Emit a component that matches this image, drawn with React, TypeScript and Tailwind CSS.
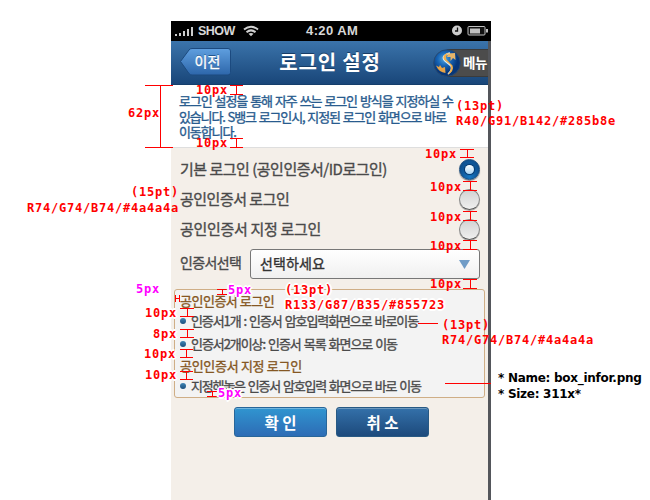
import type { ReactNode } from "react";

const KR = "font-['Noto_Sans_CJK_KR',sans-serif]";
const MEDIUM = "[-webkit-text-stroke:0.35px_currentColor]";

type NoteProps = { x: number; y: number; children: ReactNode; tone?: "red" | "pink"; halo?: boolean };

const HALO =
  "[text-shadow:1px_0_#fff,-1px_0_#fff,0_1px_#fff,0_-1px_#fff,1px_1px_#fff,-1px_-1px_#fff,2px_0_#fff,-2px_0_#fff,0_2px_#fff,0_-2px_#fff]";

function Note({ x, y, children, tone = "red", halo = false }: NoteProps) {
  return (
    <span
      className={`absolute whitespace-pre font-['DejaVu_Sans_Mono',monospace] text-[12px] leading-4 font-bold tracking-[0.78px] ${
        tone === "red" ? "text-[#ff0000]" : "text-[#f0f]"
      } ${halo ? HALO : ""}`}
      style={{ left: x, top: y - 8 }}
    >
      {children}
    </span>
  );
}

const notes: NoteProps[] = [
  { x: 128, y: 113, children: "62px" },
  { x: 196, y: 90, children: "10px" },
  { x: 196, y: 143, children: "10px" },
  { x: 425, y: 154, children: "10px" },
  { x: 430, y: 187, children: "10px" },
  { x: 430, y: 217, children: "10px" },
  { x: 430, y: 246, children: "10px" },
  { x: 430, y: 284, children: "10px" },
  { x: 131, y: 192, children: "(15pt)" },
  { x: 27, y: 208, children: "R74/G74/B74/#4a4a4a" },
  { x: 456, y: 106, children: "(13pt)" },
  { x: 456, y: 121, children: "R40/G91/B142/#285b8e" },
  { x: 285, y: 290, children: "(13pt)", halo: true },
  { x: 285, y: 305, children: "R133/G87/B35/#855723", halo: true },
  { x: 442, y: 325, children: "(13pt)" },
  { x: 442, y: 340, children: "R74/G74/B74/#4a4a4a" },
  { x: 145, y: 313, children: "10px", halo: true },
  { x: 153, y: 334, children: "8px", halo: true },
  { x: 144, y: 354, children: "10px", halo: true },
  { x: 145, y: 375, children: "10px", halo: true },
  { x: 136, y: 289, children: "5px", tone: "pink", halo: true },
  { x: 228, y: 290, children: "5px", tone: "pink", halo: true },
  { x: 218, y: 393, children: "5px", tone: "pink", halo: true },
];

const brackets = [
  [230, 85, 243, 94],
  [230, 138, 243, 147],
  [460, 149, 474, 157],
  [463, 181, 477, 190],
  [463, 211, 477, 220],
  [463, 240, 477, 249],
  [463, 279, 477, 288],
  [180, 308, 194, 316],
  [180, 329, 194, 337],
  [180, 349, 193, 357],
  [180, 371, 193, 379],
  [217, 289, 227, 294],
  [207, 391, 217, 396],
  [145, 85, 173, 147],
];

function Dimensions() {
  return (
    <svg className="absolute inset-0" width="650" height="500" fill="none" stroke="#f00" shapeRendering="crispEdges">
      {brackets.map(([l, t, r, b]) => {
        const mid = Math.floor((l + r) / 2) + (r - l > 20 ? 1.5 : 0.5);
        return <path key={`${l}-${t}`} d={`M${l} ${t + 0.5}H${r}M${l} ${b + 0.5}H${r}M${mid} ${t}V${b}`} />;
      })}
      <path d="M175.500 295V302M179.500 295V302M175 298.500H180" />
      <path d="M418 323.500H438M445 383.500H491" />
    </svg>
  );
}

function Radio({ checked = false }: { checked?: boolean }) {
  return checked ? (
    <span className="flex size-[21px] items-center justify-center rounded-full border border-[#174a7c] bg-radial-[at_50%_85%] from-[#1678c4] to-[#0b417d] shadow-[0_1px_1px_#888]">
      <span className="size-[9px] rounded-full bg-linear-to-b from-white to-[#a9d4f2] shadow-[0_0_1px_1px_#0a3566]" />
    </span>
  ) : (
    <span className="size-[21px] rounded-full border border-[#858585] border-b-[#555] bg-linear-to-b from-[#d2d2d2] to-[#f0f0f0] shadow-[0_1px_0_#aaa]" />
  );
}

function Option({ children, checked }: { children: ReactNode; checked?: boolean }) {
  return (
    <div className={`flex h-[30px] items-center justify-between pr-2 pl-[9px] text-[15px] text-[#4a4a4a] ${MEDIUM}`}>
      {children}
      <Radio checked={checked} />
    </div>
  );
}

function Item({ children }: { children: ReactNode }) {
  return (
    <>
      <span className="size-[6px] shrink-0 rounded-full bg-linear-to-b from-[#4185b5] to-[#1d4f7d]" />
      <span className="whitespace-nowrap">{children}</span>
    </>
  );
}

function StatusBar() {
  return (
    <div className="flex h-5 items-center bg-black pr-[2px] pl-1 font-['Liberation_Sans',sans-serif] text-[13px] font-bold text-[#d8d8d8]">
      <div className="flex w-[131px] items-center">
        <svg width="20" height="12" viewBox="0 0 20 12" fill="#ccc">
          <path d="M0 9h2v2H0zM4 8h2v3H4zM8 6h2v5H8zM12 4h2v7h-2zM16 2h2v9h-2z" />
        </svg>
        <span className="w-[48px] pl-[3px] text-[12.500px] tracking-[-0.5px]">SHOW</span>
        <svg width="16" height="12" viewBox="0 0 16 12" fill="none" stroke="#d0d0d0" strokeWidth="2">
          <path d="M1 4.500Q8-1 15 4.500M3.500 7.200Q8 3.500 12.500 7.200" />
          <path d="M5.500 8.800Q8 7 10.500 8.800L8 11.300Z" fill="#d0d0d0" stroke="none" />
        </svg>
      </div>
      <span className="flex-1 tracking-[0.4px]">4:20 AM</span>
      <svg width="37" height="12" viewBox="0 0 37 12">
        <circle cx="5" cy="5.500" r="5" fill="#ccc" />
        <path d="M5.500 2.500V6H3" fill="none" stroke="#111" strokeWidth="1.300" />
        <rect x="16" y="1.500" width="17" height="8.500" rx="1" fill="#111" stroke="#c0c0c0" />
        <path d="M18 3.500h10v5H18zM34 4h2v3.500h-2z" fill="#c0c0c0" />
      </svg>
    </div>
  );
}

function Header() {
  return (
    <div className="flex h-11 items-center border-b border-[#153e6b] bg-linear-to-b from-[#3b74ab] to-[#194679] pl-2">
      <button className="grid place-items-center">
        <svg className="[grid-area:1/1]" width="54" height="31" viewBox="0 0 54 31">
          <defs>
            <linearGradient id="back" x2="0" y2="1">
              <stop stopColor="#5f9fdf" />
              <stop offset="1" stopColor="#2d66aa" />
            </linearGradient>
          </defs>
          <path d="M13 1.500H49Q51.500 1.500 51.500 4V25.500Q51.500 28 49 28H13Q11 28 10 26.500L1.500 14.500L10 3Q11 1.500 13 1.500Z" fill="url(#back)" stroke="#1c4a7f" />
        </svg>
        <span className={`[grid-area:1/1] pb-1 pl-[3px] text-[14px] leading-5 text-white [text-shadow:0_-1px_#24558c] ${MEDIUM}`}>이전</span>
      </button>
      <h1 className="flex-1 pr-[6px] pb-[2px] text-center text-[20px] leading-6 font-bold tracking-[0.8px] text-white [text-shadow:0_-1px_#173d66]">로그인 설정</h1>
      <div className="flex items-center">
        <svg className="z-10" width="28" height="28" viewBox="0 0 28 28">
          <defs>
            <radialGradient id="globe" cx=".4" cy=".35">
              <stop stopColor="#50a5df" />
              <stop offset=".5" stopColor="#1765b6" />
              <stop offset="1" stopColor="#073678" />
            </radialGradient>
          </defs>
          <circle cx="14" cy="14" r="13.300" fill="url(#globe)" stroke="#294a70" />
          <path d="M17 4Q7 7 12 12L18 17Q20 21 15 25" fill="none" stroke="#dcecf5" strokeWidth="1.500" />
          <path d="M15.500 3.500Q8 6 11.500 11L17 15.500Q20 19 14.500 26Q21.500 22 19.500 16.500L13.500 10.500Q12 7 15.500 3.500Z" fill="#f4ae45" />
          <path d="M15 4.500L22 4L22.500 11L20 9L17.500 12L17.500 8L14 8Z" fill="#e6b469" />
          <path d="M3 16.500L6 18L7 16L9 19L12 18L12.500 24Q6 23.500 3 16.500Z" fill="#e8a446" />
        </svg>
        <span className="-ml-[14px] h-[28px] w-[41px] border-y border-[#3b3b3b] bg-[#4c4c4c] pl-[16px] text-[13.500px] leading-[25px] font-bold tracking-[-0.4px] whitespace-nowrap text-white">메뉴</span>
      </div>
    </div>
  );
}

function InfoBox() {
  return (
    <div className={`mt-[10px] ml-[3px] h-[109px] w-[311px] rounded-[3px] border border-[#cfae86] bg-[#f3f3f3] pl-[5px] text-[13px] text-[#4a4a4a] ${MEDIUM}`}>
      <p className="flex h-[21px] items-center tracking-[-0.5px] text-[#855723]">공인인증서 로그인</p>
      <div className="flex h-[20px] items-center gap-[5px] tracking-[-1.1px] [word-spacing:1.2px]"><Item>인증서1개 : 인증서 암호입력화면으로 바로이동</Item></div>
      <div className="flex h-[26px] items-center gap-[5px] tracking-[-1.07px] [word-spacing:1.2px]"><Item>인증서2개이상: 인증서 목록 화면으로 이동</Item></div>
      <p className="flex h-[17px] items-center tracking-[-0.3px] text-[#855723]">공인인증서 지정 로그인</p>
      <div className="flex h-[24px] items-center gap-[5px] tracking-[-1.2px] [word-spacing:1.2px]"><Item>지정해놓은 인증서 암호입력 화면으로 바로 이동</Item></div>
    </div>
  );
}

function Phone() {
  return (
    <div className={`h-[479px] w-[320px] ${KR}`}>
      <StatusBar />
      <div className="h-[459px] border-r-[3px] border-[#54565b] bg-[#f4efe9]">
        <Header />
        <div className={`h-[63px] border-b border-[#dedede] bg-white pt-[8px] pl-2 text-[13px] leading-[15.5px] whitespace-nowrap text-[#285b8e] [word-spacing:1.2px] ${MEDIUM}`}>
          <p className="tracking-[-1.1px]">로그인 설정을 통해 자주 쓰는 로그인 방식을 지정하실 수</p>
          <p className="tracking-[-1.16px]">있습니다. S뱅크 로그인시, 지정된 로그인 화면으로 바로</p>
          <p className="tracking-[-1.1px]">이동합니다.</p>
        </div>
        <div className="pt-[6px]">
          <Option checked><span className="tracking-[-0.5px]">기본 로그인 (공인인증서/ID로그인)</span></Option>
          <Option><span className="tracking-[-0.5px]">공인인증서 로그인</span></Option>
          <Option><span className="tracking-[-0.3px]">공인인증서 지정 로그인</span></Option>
        </div>
        <div className={`mt-[5px] flex items-center pl-[9px] text-[14px] text-[#4a4a4a] ${MEDIUM}`}>
          <span className="w-[70px] pb-[3px] tracking-[-0.6px]">인증서선택</span>
          <div className="flex h-[30px] w-[230px] items-center justify-between rounded-[3px] border border-[#777] bg-linear-to-b from-white to-[#f0f0f0] pr-[9px] pl-[9px] text-[#333]">
            <span className="pb-px tracking-[0.1px]">선택하세요</span>
            <svg width="11" height="9" viewBox="0 0 11 9"><path d="M0 0h11L5.500 9z" fill="#709cc7" /></svg>
          </div>
        </div>
        <InfoBox />
        <div className="mt-[9px] flex gap-[9px] pl-[63px] text-[15.500px] font-bold text-white">
          <button className="h-[30px] w-[93px] rounded-[3px] border border-[#286699] bg-linear-to-b from-[#3095d0] to-[#2d6cb5] leading-[26px] shadow-[inset_0_1px_#70b5de]">확 인</button>
          <button className="h-[30px] w-[93px] rounded-[3px] border border-[#285983] bg-linear-to-b from-[#3471aa] to-[#1d4a7c] leading-[26px] shadow-[inset_0_1px_#6c98bd]">취 소</button>
        </div>
      </div>
    </div>
  );
}

export default function App() {
  return (
    <main className="relative flex h-[500px] w-[650px] overflow-hidden bg-white pt-[21px] pl-[171px]">
      <Phone />
      <div className="pt-[350px] pl-[7px] font-['DejaVu_Sans',sans-serif] text-[12px] leading-[15.5px] font-bold tracking-[-0.28px] whitespace-pre text-black">
        <p>* Name: box_infor.png</p>
        <p>* Size: 311x*</p>
      </div>
      <Dimensions />
      {notes.map((note) => (
        <Note key={`${note.x}-${note.y}`} {...note} />
      ))}
    </main>
  );
}
